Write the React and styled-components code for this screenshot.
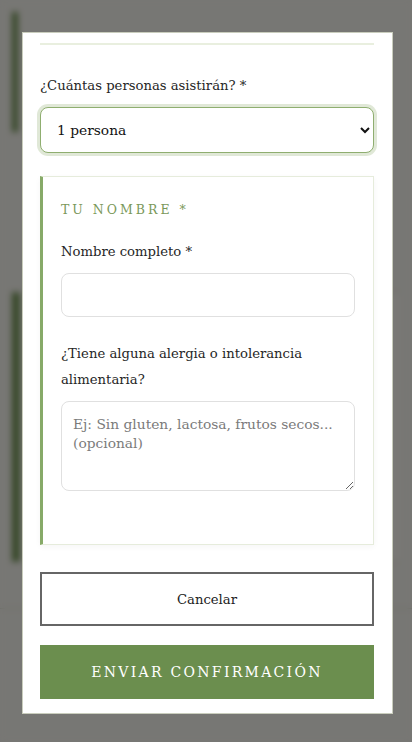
import React from 'react';
import styled, { createGlobalStyle } from 'styled-components';

const GlobalStyle = createGlobalStyle`
    html, body {
        margin: 0;
        padding: 0;
        background: #efeee8;
        font-family: 'DejaVu Serif', 'Liberation Serif', serif;
    }
    * { box-sizing: border-box; }
`;

const App = () => {
    return (
        <>
            <GlobalStyle />
            <Page>
                <Accent />
                <BackCard />
                <BackRule />
            </Page>

            <Overlay>
                <Modal>
                    <Divider />

                    <Label>¿Cuántas personas asistirán? *</Label>
                    <Select defaultValue="1">
                        <option value="1">1 persona</option>
                        <option value="2">2 personas</option>
                        <option value="3">3 personas</option>
                    </Select>

                    <GuestCard>
                        <GuestTitle>Tu nombre *</GuestTitle>

                        <Field>
                            <Label>Nombre completo *</Label>
                            <Input type="text" />
                        </Field>

                        <Field>
                            <Label>¿Tiene alguna alergia o intolerancia alimentaria?</Label>
                            <TextArea placeholder="Ej: Sin gluten, lactosa, frutos secos... (opcional)" />
                        </Field>
                    </GuestCard>

                    <Actions>
                        <Button type="button">Cancelar</Button>
                        <Button type="submit" $primary>Enviar confirmación</Button>
                    </Actions>
                </Modal>
            </Overlay>
        </>
    );
};

/* page behind the modal */
const Page = styled.div`
    min-height: 742px;
    padding: 12px;
    display: flex;
    flex-direction: column;
`;

const Accent = styled.div`
    width: 6px;
    height: 120px;
    background: #6b8e4e;
`;

const BackCard = styled.div`
    margin-top: 160px;
    height: 270px;
    border-left: 8px solid #6b8e4e;
    border-top: 1px solid #d8dccd;
    border-bottom: 1px solid #d8dccd;
    background: #f3f2ec;
`;

const BackRule = styled.div`
    margin: 46px -12px 0;
    height: 1px;
    background: #d8dccd;
`;

/* modal */
const Overlay = styled.div`
    position: fixed;
    inset: 0;
    background: rgba(0, 0, 0, 0.5);
    backdrop-filter: blur(3px);
    display: flex;
    align-items: flex-start;
    padding: 32px 0 0 22px;
`;

const Modal = styled.div`
    width: 371px;
    height: 682px;
    background: #fff;
    border: 1px solid #c9cdbd;
    padding: 10px 18px 0 17px;
    overflow: hidden;
    display: flex;
    flex-direction: column;
`;

const Divider = styled.div`
    flex-shrink: 0;
    height: 2px;
    background: #e9efdf;
    margin-bottom: 28px;
`;

const Label = styled.label`
    display: block;
    font-size: 13.2px;
    line-height: 26px;
    color: #262626;
    margin-bottom: 8px;
`;

const Select = styled.select`
    flex-shrink: 0;
    width: 100%;
    height: 46px;
    padding: 0 10px 0 12px;
    font-family: inherit;
    font-size: 13.8px;
    color: #111;
    background: #fff;
    border: 1px solid #8fae70;
    border-radius: 8px;
    box-shadow: 0 0 0 3px rgba(143, 174, 112, 0.28);
    outline: none;
`;

const GuestCard = styled.div`
    flex-shrink: 0;
    margin-top: 23px;
    background: #fff;
    border: 1px solid #e6ecdc;
    border-left: 3px solid #87aa68;
    padding: 23px 18px 53px 18px;
    box-shadow: 0 2px 6px rgba(0, 0, 0, 0.04);
`;

const GuestTitle = styled.h3`
    margin: 0 0 19px;
    font-size: 12.5px;
    line-height: 20px;
    font-weight: 400;
    letter-spacing: 3px;
    text-transform: uppercase;
    color: #7a985a;
`;

const Field = styled.div`
    & + & {
        margin-top: 24px;
    }
`;

const Input = styled.input`
    display: block;
    width: 100%;
    height: 44px;
    padding: 0 12px;
    font-family: inherit;
    font-size: 13.8px;
    border: 1px solid #e0e0e0;
    border-radius: 8px;
    outline: none;
`;

const TextArea = styled.textarea`
    display: block;
    width: 100%;
    height: 90px;
    padding: 13px 11px;
    font-family: inherit;
    font-size: 13.8px;
    line-height: 19px;
    border: 1px solid #e0e0e0;
    border-radius: 8px;
    resize: vertical;
    outline: none;

    &::placeholder {
        color: #7b7b7b;
    }
`;

const Actions = styled.div`
    flex-shrink: 0;
    margin-top: 27px;
    display: flex;
    flex-direction: column;
    gap: 19px;
`;

const Button = styled.button`
    height: 54px;
    width: 100%;
    font-family: inherit;
    font-size: ${p => (p.$primary ? '14px' : '13.2px')};
    cursor: pointer;
    border: 2px solid ${p => (p.$primary ? '#6b8e4e' : '#666')};
    background: ${p => (p.$primary ? '#6b8e4e' : '#fff')};
    color: ${p => (p.$primary ? '#fff' : '#222')};
    letter-spacing: ${p => (p.$primary ? '2.3px' : '0')};
    text-transform: ${p => (p.$primary ? 'uppercase' : 'none')};
`;

export default App;
